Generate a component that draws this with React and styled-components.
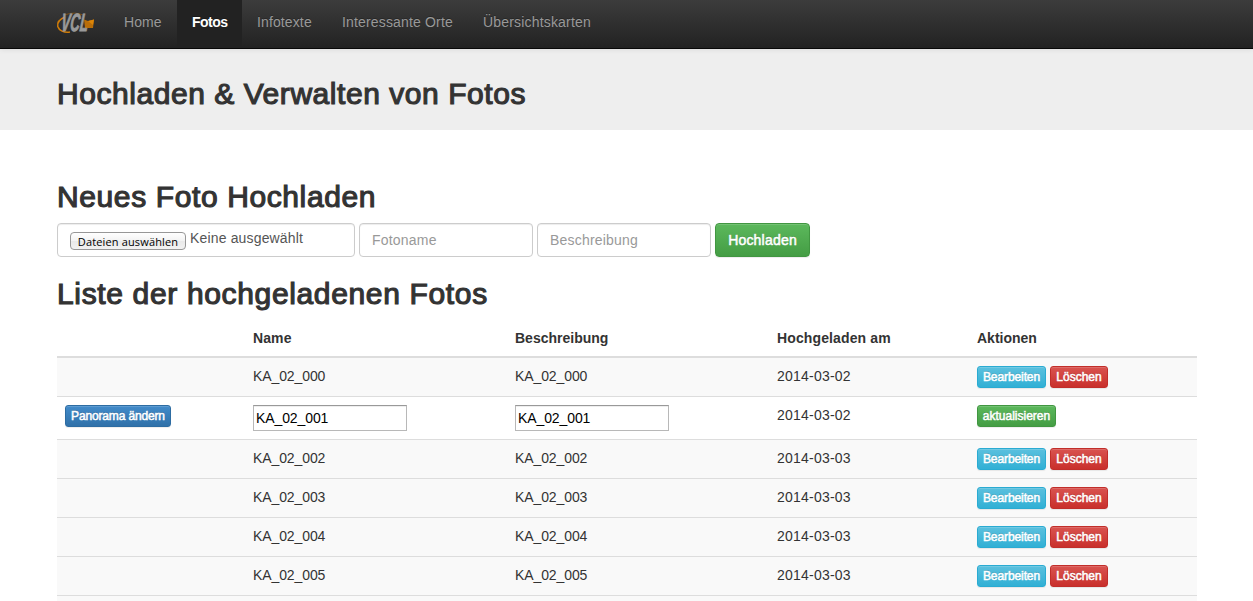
import React from "react";
import styled, { createGlobalStyle, css } from "styled-components";

const GlobalStyle = createGlobalStyle`
  * { box-sizing: border-box; }
  body {
    margin: 0;
    background: #fff;
    color: #333;
    font: 14px/20px "Liberation Sans", Arial, sans-serif;
    overflow: hidden;
  }
`;

const Page = styled.div`
  height: 601px;
  overflow: hidden;
`;

const Navbar = styled.nav`
  position: relative;
  display: flex;
  align-items: stretch;
  height: 49px;
  padding-left: 56px;
  border-bottom: 1px solid #080808;
  background: linear-gradient(to bottom, #3c3c3c 0%, #222 100%);
  box-shadow: 0 1px 5px rgba(0, 0, 0, 0.075);
`;

const Brand = styled.a`
  display: block;
  width: 53px;
  padding-top: 8px;
  svg { display: block; overflow: visible; }
`;

const NavItem = styled.a`
  width: ${(p) => p.$width}px;
  padding: 12px 0 0 15px;
  color: #999;
  text-shadow: 0 -1px 0 rgba(0, 0, 0, 0.25);
  letter-spacing: ${(p) => p.$spacing || 0}px;
  white-space: nowrap;
  ${(p) =>
    p.$active &&
    css`
      color: #fff;
      background: #222;
      font-weight: 700;
    `}
`;

const Jumbotron = styled.header`
  height: 81px;
  padding: 28px 57px 0;
  background: #eee;
`;

const Heading = styled.h2`
  margin: 0;
  font-size: 30px;
  line-height: 33px;
  font-weight: 400;
  letter-spacing: ${(p) => p.$spacing}px;
  -webkit-text-stroke: 1.15px #333;
  white-space: nowrap;
`;

const Content = styled.main`
  width: 1140px;
  margin-left: 57px;
  padding-top: 50px;
`;

const UploadForm = styled.form`
  display: flex;
  gap: 4px;
  height: 34px;
  margin: 10px 0 20px;
`;

const fieldBox = css`
  height: 34px;
  border: 1px solid #ccc;
  border-radius: 4px;
  background: #fff;
  box-shadow: inset 0 1px 1px rgba(0, 0, 0, 0.075);
`;

const FileField = styled.div`
  ${fieldBox}
  display: flex;
  gap: 4px;
  width: 298px;
  padding: 4px 12px;
  color: #555;
  letter-spacing: 0.16px;
`;

const FileButton = styled.button`
  width: 116px;
  height: 18px;
  margin-top: 4px;
  padding: 2px 0 0;
  border: 1px solid #979797;
  border-radius: 4px;
  background: linear-gradient(#fff, #f3f3f3 50%, #e9e9e9 50%, #f2f2f2);
  color: #000;
  font: 11px/14px "Open Sans", sans-serif;
  letter-spacing: 0.15px;
  white-space: nowrap;
`;

const TextField = styled.input`
  ${fieldBox}
  width: 174px;
  padding: 5px 12px 6px;
  font: inherit;
  letter-spacing: 0.2px;
  &::placeholder { color: #999; opacity: 1; }
`;

const tones = {
  success: ["#5cb85c", "#449d44", "#419641"],
  info: ["#5bc0de", "#31b0d5", "#2aabd2"],
  danger: ["#d9534f", "#c9302c", "#c12e2a"],
  primary: ["#428bca", "#3071a9", "#2d6ca2"],
};

const Button = styled.button`
  width: ${(p) => p.$width}px;
  height: 34px;
  padding: 0 0 1px;
  border: 1px solid ${(p) => tones[p.$tone][2]};
  border-radius: 4px;
  background: linear-gradient(${(p) => tones[p.$tone][0]}, ${(p) => tones[p.$tone][1]});
  box-shadow: inset 0 1px 0 rgba(255, 255, 255, 0.15), 0 1px 1px rgba(0, 0, 0, 0.075);
  color: #fff;
  font: 14px/20px "Liberation Sans", Arial, sans-serif;
  letter-spacing: 0.2px;
  -webkit-text-stroke: 0.5px #fff;
  text-shadow: 0 -1px 0 rgba(0, 0, 0, 0.2);
  white-space: nowrap;
`;

const SmallButton = styled(Button)`
  height: 22px;
  border-radius: 3px;
  font-size: 12px;
  line-height: 18px;
  letter-spacing: ${(p) => p.$spacing || 0}px;
`;

const Table = styled.div`
  margin-top: 9px;
`;

const Row = styled.div`
  display: grid;
  grid-template-columns: 188px 262px 262px 200px 228px;
  height: ${(p) => (p.$editing ? 43 : 39)}px;
  border-bottom: 1px solid #ddd;
  background: ${(p) => (p.$editing ? "#fff" : "#f9f9f9")};
`;

const HeaderRow = styled(Row)`
  height: 39px;
  padding-top: 1px;
  border-bottom-width: 2px;
  background: #fff;
  font-weight: 700;
`;

const Cell = styled.div`
  display: flex;
  align-items: flex-start;
  gap: 4px;
  padding: 8px;
  letter-spacing: ${(p) => p.$spacing || 0}px;
`;

const EditInput = styled.input`
  width: 154px;
  height: 26px;
  padding: 1px 2px;
  border: 1px solid #b8b8b8;
  border-top-color: #999;
  box-shadow: inset 0 1px 0 #eee;
  background: #fff;
  color: #000;
  font: inherit;
  letter-spacing: -0.1px;
`;

const photos = [
  { name: "KA_02_000", date: "2014-03-02" },
  { name: "KA_02_001", date: "2014-03-02", editing: true },
  { name: "KA_02_002", date: "2014-03-03" },
  { name: "KA_02_003", date: "2014-03-03" },
  { name: "KA_02_004", date: "2014-03-03" },
  { name: "KA_02_005", date: "2014-03-03" },
];

function Logo() {
  return (
    <svg width="40" height="28" viewBox="0 0 40 28">
      <path d="M9 9C4 11 1 14.500 1.800 18.500C3 22.500 8 25 14 24" fill="none" stroke="#d07c08" strokeWidth="1.6" />
      <path d="M10 6.500Q19 3.500 27 7" fill="none" stroke="#8a5510" strokeWidth="0.8" />
      <path d="M28 11.500L32 13L38 11.500L37 20L29 20Z" fill="#b96d08" />
      <path d="M32 13L38 11.500L37 17Z" fill="#dc8508" />
      <g transform="translate(4.500 23) skewX(-6)">
        <text
          fill="#999"
          stroke="#999"
          strokeWidth="0.8"
          fontFamily="Liberation Sans, Arial, sans-serif"
          fontSize="25"
          fontWeight="700"
          fontStyle="italic"
          textLength="27"
          lengthAdjust="spacingAndGlyphs"
        >
          VCL
        </text>
      </g>
    </svg>
  );
}

function PhotoRow({ name, date, editing }) {
  return (
    <Row $editing={editing}>
      <Cell>
        {editing && (
          <SmallButton $tone="primary" $width={106} $spacing={-0.15}>
            Panorama ändern
          </SmallButton>
        )}
      </Cell>
      <Cell $spacing={-0.1}>{editing ? <EditInput defaultValue={name} /> : name}</Cell>
      <Cell $spacing={-0.1}>{editing ? <EditInput defaultValue={name} /> : name}</Cell>
      <Cell $spacing={0.22}>{date}</Cell>
      <Cell>
        {editing ? (
          <SmallButton $tone="success" $width={79}>
            aktualisieren
          </SmallButton>
        ) : (
          <>
            <SmallButton $tone="info" $width={69} $spacing={-0.1}>
              Bearbeiten
            </SmallButton>
            <SmallButton $tone="danger" $width={58}>
              Löschen
            </SmallButton>
          </>
        )}
      </Cell>
    </Row>
  );
}

export default function App() {
  return (
    <Page>
      <GlobalStyle />
      <Navbar>
        <Brand>
          <Logo />
        </Brand>
        <NavItem $width={68} $spacing={0.1}>Home</NavItem>
        <NavItem $width={65} $active $spacing={-0.5}>
          Fotos
        </NavItem>
        <NavItem $width={85} $spacing={0.12}>Infotexte</NavItem>
        <NavItem $width={141} $spacing={0.16}>Interessante Orte</NavItem>
        <NavItem $width={138} $spacing={0.18}>Übersichtskarten</NavItem>
      </Navbar>
      <Jumbotron>
        <Heading $spacing={0.55}>Hochladen &amp; Verwalten von Fotos</Heading>
      </Jumbotron>
      <Content>
        <Heading $spacing={0.61}>Neues Foto Hochladen</Heading>
        <UploadForm>
          <FileField>
            <FileButton type="button">Dateien auswählen</FileButton>
            <span>Keine ausgewählt</span>
          </FileField>
          <TextField placeholder="Fotoname" />
          <TextField placeholder="Beschreibung" />
          <Button type="button" $tone="success" $width={95}>
            Hochladen
          </Button>
        </UploadForm>
        <Heading $spacing={0.65}>Liste der hochgeladenen Fotos</Heading>
        <Table>
          <HeaderRow>
            <Cell />
            <Cell $spacing={0.1}>Name</Cell>
            <Cell>Beschreibung</Cell>
            <Cell $spacing={0.12}>Hochgeladen am</Cell>
            <Cell>Aktionen</Cell>
          </HeaderRow>
          {photos.map((p) => (
            <PhotoRow key={p.name} {...p} />
          ))}
          <Row />
        </Table>
      </Content>
    </Page>
  );
}
